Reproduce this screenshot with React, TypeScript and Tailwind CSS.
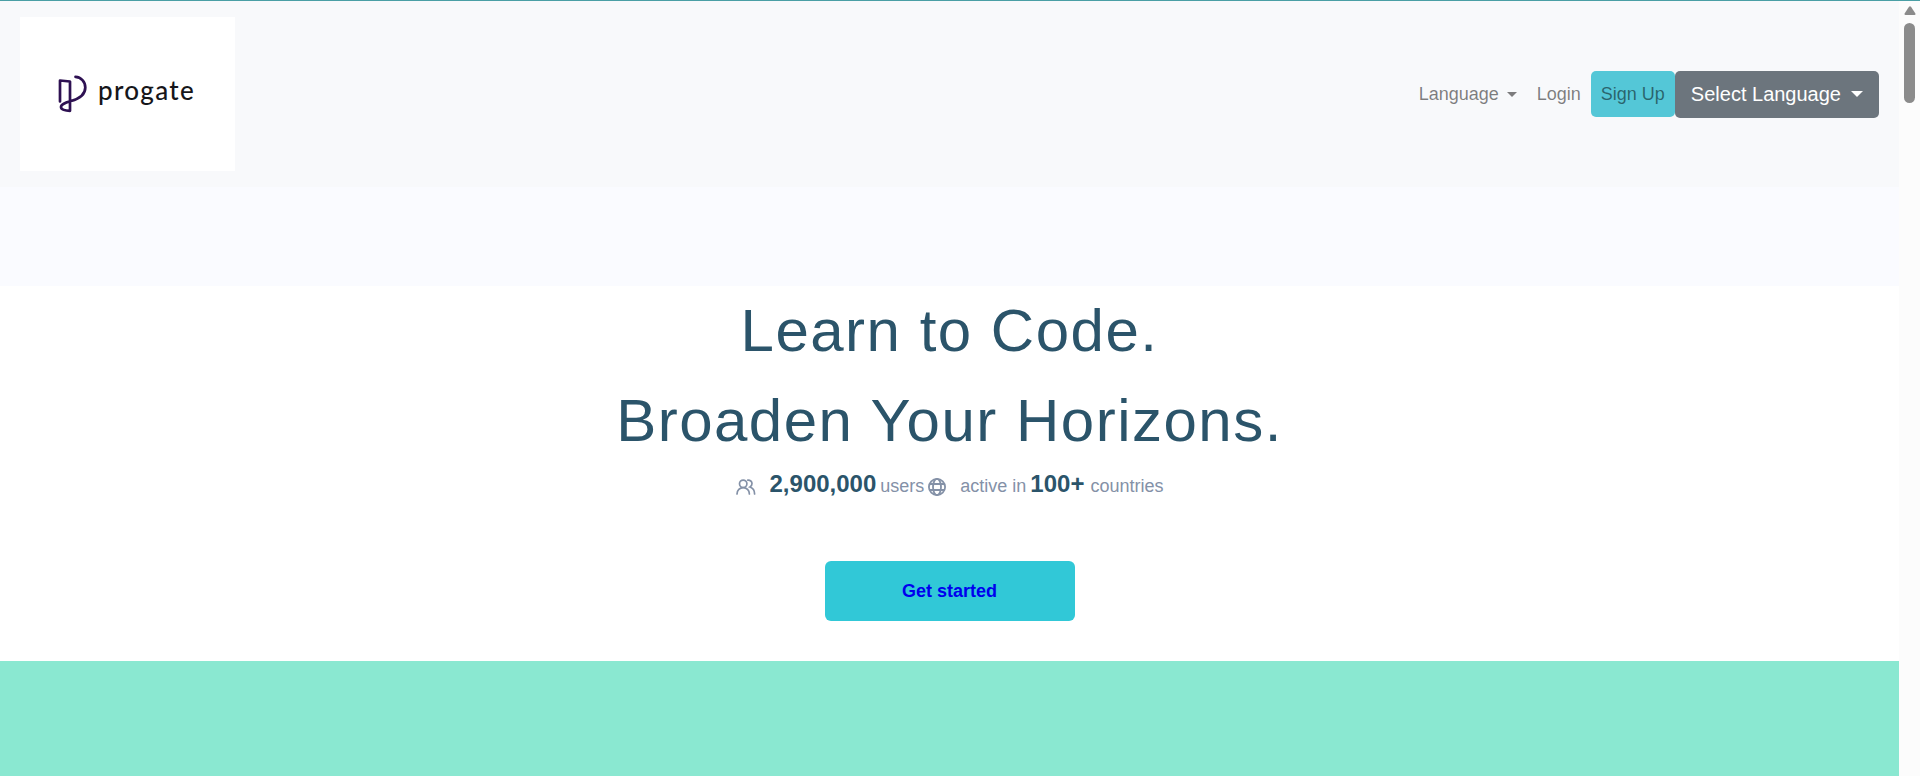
import React from "react";

function Caret() {
  return (
    <span
      aria-hidden="true"
      className="inline-block h-0 w-0 border-x-[5px] border-t-[5px] border-x-transparent border-t-current"
    />
  );
}

function Logo() {
  return (
    <a href="#home" className="flex h-[154px] w-[215px] items-center bg-white pl-[38px]">
      <svg width="30" height="38" viewBox="0 0 30 38" fill="none" aria-hidden="true">
        <path
          d="M2 26.5V5.5L12 6.5V35.8C7 35.8 3 34.5 3 32C3 29 8 27.6 13 26C21 23.8 27.3 19.5 27.3 12.5C27.3 6.5 23 2.2 17.5 1.8"
          stroke="#2e1152"
          strokeWidth="2.7"
          strokeLinecap="round"
          strokeLinejoin="round"
        />
      </svg>
      <span className="pb-2 pl-2.5 font-['Lato',sans-serif] text-[26px] leading-8 font-medium tracking-wider text-[#16161a]">
        progate
      </span>
    </a>
  );
}

function UsersIcon() {
  return (
    <svg width="20" height="16" viewBox="0 0 20 16" fill="none" stroke="#8491a7" strokeWidth="1.7" strokeLinecap="round" aria-hidden="true">
      <circle cx="7.2" cy="4.8" r="3.7" />
      <path d="M1 15C1 11.2 3.8 8.6 7.2 8.6S13.4 11.2 13.4 15" />
      <path d="M11.8 1.1C14.2 0.9 16 2.5 16 4.6C16 6.2 15.2 7.4 14 8C16.8 9 18.6 11.4 18.6 15" />
    </svg>
  );
}

function GlobeIcon() {
  return (
    <svg width="18" height="18" viewBox="0 0 18 18" fill="none" stroke="#8491a7" strokeWidth="1.8" aria-hidden="true">
      <circle cx="9" cy="9" r="8.1" />
      <ellipse cx="9" cy="9" rx="4" ry="8.1" />
      <path d="M1.8 6H16.2M1.8 12H16.2" />
    </svg>
  );
}

function NavBar() {
  return (
    <header className="flex items-center justify-between bg-[#f8f9fb] px-5 py-4">
      <Logo />
      <nav className="flex items-center text-lg text-black/50">
        <button type="button" className="flex items-center gap-2 px-2.5 py-2">
          Language <Caret />
        </button>
        <a href="#login" className="px-2.5 py-2">
          Login
        </a>
        <a href="#signup" className="rounded-[5px] bg-[#54c7d7] px-2.5 py-2 leading-[30px]">
          Sign Up
        </a>
        <button
          type="button"
          className="flex items-center gap-2.5 rounded-[5px] bg-[#6c757d] px-4 py-2 text-xl leading-[31px] text-white"
        >
          Select Language
          <span
            aria-hidden="true"
            className="h-0 w-0 border-x-[6px] border-t-[6px] border-x-transparent border-t-current"
          />
        </button>
      </nav>
    </header>
  );
}

function Hero() {
  return (
    <section className="flex flex-col items-center bg-white pb-10">
      <h1 className="text-center text-[60px] leading-[90px] tracking-wide text-[#2b546a]">
        Learn to Code.
        <br />
        Broaden Your Horizons.
      </h1>
      <div className="flex h-9 items-center text-lg text-[#8491a7]">
        <span className="pt-1.5">
          <UsersIcon />
        </span>
        <p className="flex items-baseline gap-1 pl-3.5">
          <strong className="text-2xl text-[#2b546a]">2,900,000</strong>
          users
        </p>
        <span className="pt-1.5 pl-1">
          <GlobeIcon />
        </span>
        <p className="flex items-baseline pl-3.5">
          active in
          <strong className="pr-1.5 pl-1 text-2xl text-[#2b546a]">100+</strong>
          countries
        </p>
      </div>
      <a
        href="#start"
        className="mt-[59px] flex h-[60px] w-[250px] items-center justify-center rounded-md bg-[#31c8d7] text-lg font-bold text-[#0000ee]"
      >
        Get started
      </a>
    </section>
  );
}

function ScrollTrack() {
  return (
    <div aria-hidden="true" className="flex w-[21px] shrink-0 flex-col items-center bg-[#fcfcfc] pt-[5px]">
      <svg width="12" height="10" viewBox="0 0 12 10" fill="#8b8b8b">
        <path d="M5 0.8Q6 -0.2 7 0.8L11.4 7.6Q11.8 9 10.5 9H1.5Q0.2 9 0.6 7.6Z" />
      </svg>
      <div className="mt-[7px] h-20 w-[11px] rounded-full bg-[#8b8b8b]" />
    </div>
  );
}

export default function App() {
  return (
    <div className="flex min-h-screen flex-col border-t border-[#4a9fa5] font-['Liberation_Sans',Arial,sans-serif]">
      <div className="flex flex-1">
        <main className="flex min-w-0 flex-1 flex-col">
          <NavBar />
          <div className="h-[99px] bg-[#fafbff]" />
          <Hero />
          <div className="flex-1 bg-[#8ae8d1]" />
        </main>
        <ScrollTrack />
      </div>
    </div>
  );
}
